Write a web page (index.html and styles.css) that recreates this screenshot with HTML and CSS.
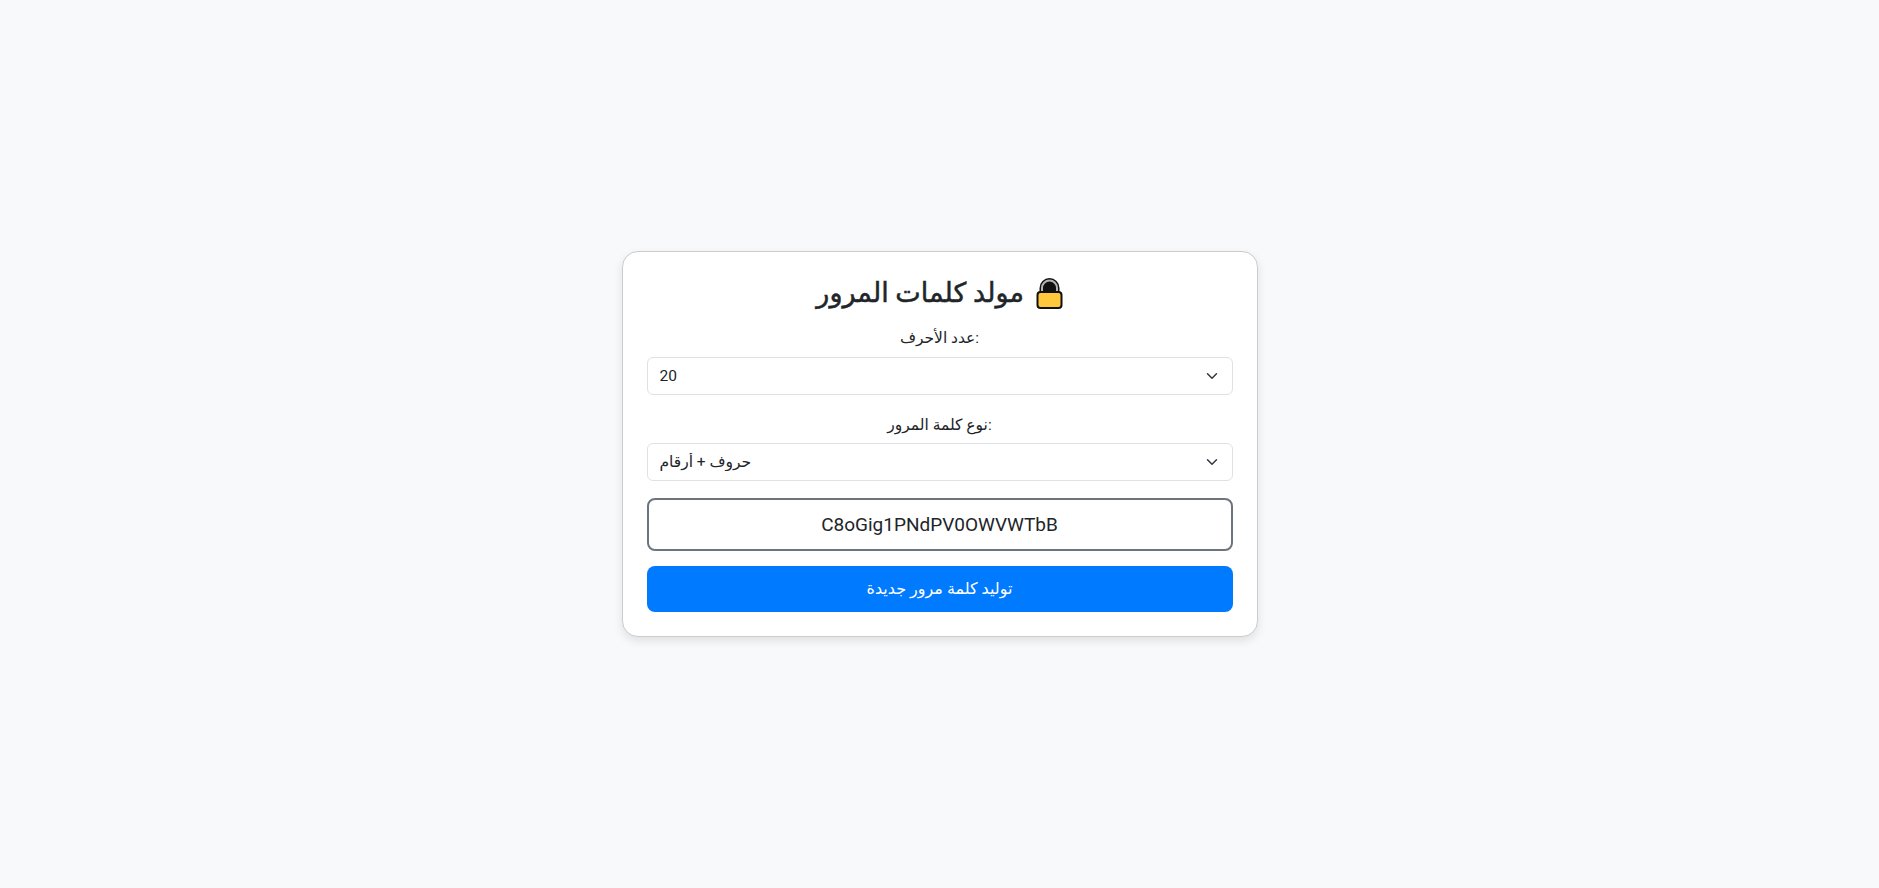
FILE: index.html
```html
<!DOCTYPE html>
<html lang="ar">
<head>
    <meta charset="UTF-8">
    <title>مولد كلمات المرور</title>
    <link rel="stylesheet" href="styles.css">
</head>
<body>
    <div class="card">
        <h2 class="title" dir="rtl">
            <svg class="lock" viewBox="0 0 26 32" aria-hidden="true">
                <path d="M3 17V11a10 10 0 0 1 20 0v6z" fill="#111"/>
                <path d="M5.5 15V11a7.5 7.5 0 0 1 15 0v4" fill="none" stroke="#b5b5b5" stroke-width="2"/>
                <rect x="1" y="15" width="24" height="16" rx="3" fill="#ffc83d" stroke="#111" stroke-width="2"/>
            </svg>
            مولد كلمات المرور
        </h2>
        <label class="field-label">عدد الأحرف:</label>
        <select class="field">
            <option>20</option>
        </select>
        <label class="field-label">نوع كلمة المرور:</label>
        <select class="field">
            <option>حروف + أرقام</option>
        </select>
        <div class="result">C8oGig1PNdPV0OWVWTbB</div>
        <button class="generate">توليد كلمة مرور جديدة</button>
    </div>
</body>
</html>
```

FILE: styles.css
```css
* {
    box-sizing: border-box;
}
body {
    display: flex;
    justify-content: center;
    align-items: center;
    height: 100vh;
    margin: 0;
    background-color: #f8f9fa;
    color: #212529;
    font-family: Roboto, "DejaVu Sans", sans-serif;
    font-size: 16px;
    line-height: 1.5;
}
.card {
    display: flex;
    flex-direction: column;
    width: 636px;
    padding: 24px;
    background-color: #fff;
    border: 1px solid #ccc;
    border-radius: 16px;
    box-shadow: 0 4px 10px rgba(0, 0, 0, 0.1);
    text-align: center;
}
.title {
    margin: 1px 0 16px;
    font-size: 27px;
    font-weight: 400;
    line-height: 1.2;
    -webkit-text-stroke: 0.5px #212529;
}
.lock {
    width: 27px;
    height: 32px;
    margin-left: 5px;
    vertical-align: -7px;
}
.field-label {
    margin-top: 2px;
    margin-bottom: 6px;
    font-size: 15.5px;
}
.field {
    height: 38px;
    margin-bottom: 17px;
    padding: 6px 36px 6px 12px;
    appearance: none;
    background-color: #fff;
    background-image: url("data:image/svg+xml,%3csvg xmlns='http://www.w3.org/2000/svg' viewBox='0 0 16 16'%3e%3cpath fill='none' stroke='%23343a40' stroke-linecap='round' stroke-linejoin='round' stroke-width='2' d='m2 5 6 6 6-6'/%3e%3c/svg%3e");
    background-repeat: no-repeat;
    background-position: right 12px center;
    background-size: 16px 12px;
    border: 1px solid #dee2e6;
    border-radius: 6px;
    color: #212529;
    font-family: inherit;
    font-size: 15.5px;
}
.result {
    height: 53px;
    margin-bottom: 15px;
    padding: 12px;
    border: 2px solid #6c757d;
    border-radius: 8px;
    font-size: 19px;
    line-height: 25px;
}
.generate {
    height: 46px;
    background-color: #007bff;
    border: none;
    border-radius: 8px;
    color: #fff;
    font-family: inherit;
    font-size: 16px;
}
```
